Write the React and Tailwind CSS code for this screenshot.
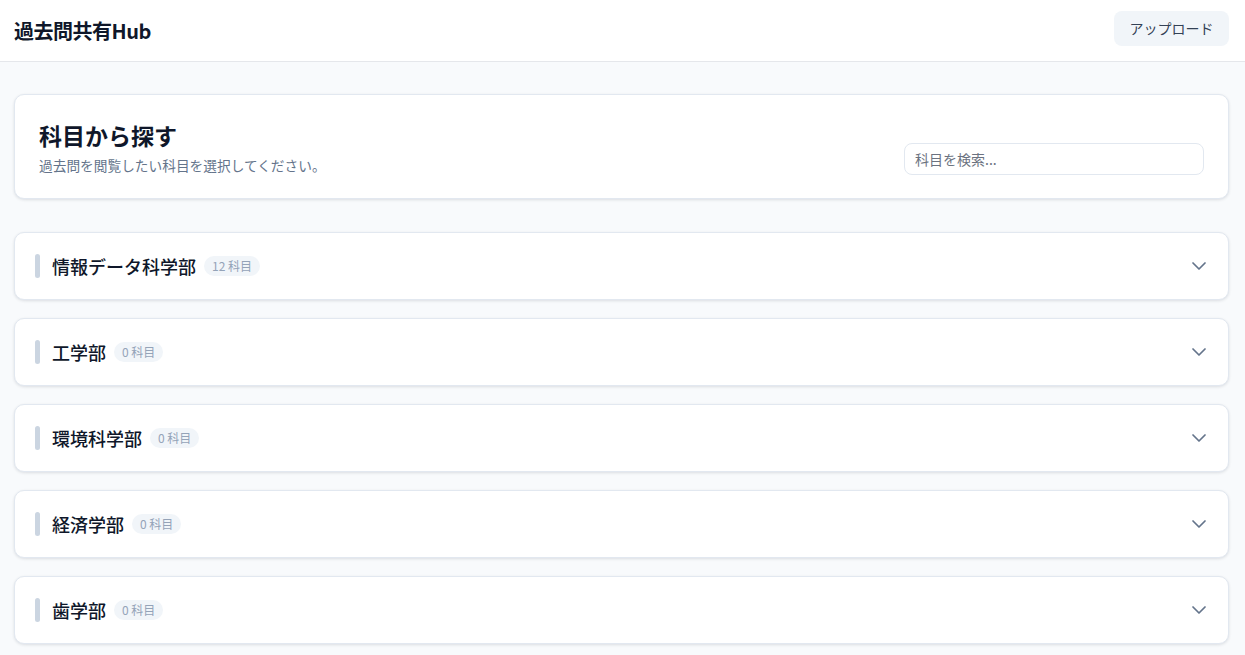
import { ChevronDown } from "lucide-react";

const faculties = [
  { name: "情報データ科学部", count: 12 },
  { name: "工学部", count: 0 },
  { name: "環境科学部", count: 0 },
  { name: "経済学部", count: 0 },
  { name: "歯学部", count: 0 },
];

export default function App() {
  return (
    <div
      className="min-h-screen bg-[#f8fafc] text-[#0f172a]"
      style={{ fontFamily: '"Noto Sans CJK JP", "Noto Sans", sans-serif' }}
    >
      {/* Header */}
      <header className="h-[62px] bg-white border-b border-[#e5e7eb] flex items-center justify-between pl-[14px] pr-4">
        <h1 className="text-[20px] font-bold tracking-tight text-[#0f172a]">過去問共有Hub</h1>
        <button className="h-[35px] w-[115px] rounded-lg bg-[#f1f5f9] text-[14px] text-[#334155] mt-[-5px]">
          アップロード
        </button>
      </header>

      <main className="pl-[14px] pr-4 pt-8">
        {/* Search card */}
        <section className="bg-white border border-[#e2e8f0] rounded-[10px] shadow-[0_1px_3px_rgba(15,23,42,0.12)] px-6 h-[105px] flex items-center justify-between">
          <div>
            <h2 className="text-[23px] font-bold leading-8">科目から探す</h2>
            <p className="text-[13.7px] text-[#64748b] leading-5 mt-1">過去問を閲覧したい科目を選択してください。</p>
          </div>
          <input
            type="text"
            placeholder="科目を検索..."
            className="w-[300px] h-8 mt-6 rounded-lg border border-[#e2e8f0] px-[10px] text-[14px] text-[#334155] placeholder:text-[#6b7280] outline-none"
          />
        </section>

        {/* Faculty accordions */}
        <div className="mt-[33px] flex flex-col gap-[18px]">
          {faculties.map((f) => (
            <div
              key={f.name}
              className="bg-white border border-[#e2e8f0] rounded-[10px] shadow-[0_1px_3px_rgba(15,23,42,0.12)] h-[68px] pl-5 pr-[17px] flex items-center justify-between"
            >
              <div className="flex items-center">
                <span className="w-[5px] h-6 rounded-full bg-[#cbd5e1] mr-3" />
                <span className="text-[18px] font-medium text-[#0f172a]">{f.name}</span>
                <span className="ml-2 h-5 px-2 rounded-full bg-[#f1f5f9] text-[12px] text-[#94a3b8] flex items-center">
                  {f.count} 科目
                </span>
              </div>
              <ChevronDown size={24} strokeWidth={1.75} className="text-[#64748b]" />
            </div>
          ))}
        </div>
      </main>
    </div>
  );
}
